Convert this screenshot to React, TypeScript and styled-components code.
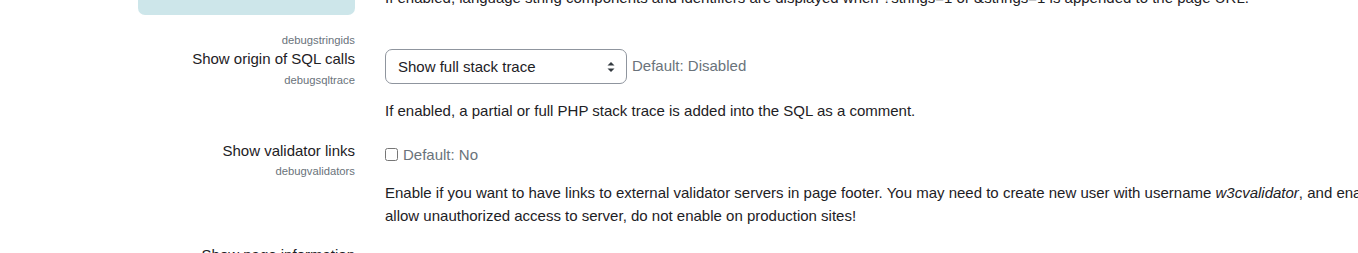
import styled, { createGlobalStyle } from "styled-components";

const GlobalStyle = createGlobalStyle`
  html, body {
    margin: 0;
    padding: 0;
    background: #fff;
    overflow: hidden;
  }
  body {
    font-family: "Liberation Sans", Arial, sans-serif;
    font-size: 15px;
    line-height: 1.5;
    color: #1d2125;
  }
`;

const Page = styled.div`
  margin-top: -13px;
  padding-left: 138px;
  height: 266px;
`;

const Item = styled.div`
  display: grid;
  grid-template-columns: 217px 1240px;
  column-gap: 30px;
`;

const LabelCol = styled.div`
  text-align: right;
  display: flex;
  flex-direction: column;
  align-items: flex-end;
`;

const Highlight = styled.div`
  align-self: stretch;
  height: 28px;
  margin-bottom: 17px;
  background: #cde6ea;
  border-radius: 0 0 7px 7px;
`;

const Title = styled.label`
  font-size: 15px;
  line-height: 22.5px;
  color: #1d2125;
`;

const ShortName = styled.div<{ $shift?: number }>`
  margin-top: ${(p) => p.$shift ?? 0}px;
  font-size: 11.25px;
  line-height: 16px;
  color: #6a737b;
`;

const SettingCol = styled.div`
  display: flex;
  flex-direction: column;
  align-items: flex-start;
`;

const Controls = styled.div<{ $offset: number }>`
  display: flex;
  align-items: center;
  margin-top: ${(p) => p.$offset}px;
`;

const SelectWrap = styled.div`
  position: relative;
  width: 242px;
  height: 35px;
`;

const Select = styled.select`
  appearance: none;
  -webkit-appearance: none;
  box-sizing: border-box;
  width: 100%;
  height: 100%;
  margin: 0;
  padding: 0 28px 0 12px;
  font-family: "Liberation Sans", Arial, sans-serif;
  font-size: 15px;
  color: #1d2125;
  background: #fff;
  border: 1px solid #8f959e;
  border-radius: 7px;
  outline: none;
`;

const Arrows = styled.svg`
  position: absolute;
  right: 12px;
  top: 13px;
  pointer-events: none;
`;

const DefaultInfo = styled.span<{ $gap: number }>`
  margin-left: ${(p) => p.$gap}px;
  color: #6a737b;
  font-size: 15px;
  line-height: 22.5px;
`;

const Checkbox = styled.input`
  width: 13px;
  height: 13px;
  margin: 0;
`;

const Description = styled.div`
  margin-top: 16px;
  margin-bottom: 17px;
  font-size: 15px;
  line-height: 22.5px;
  color: #1d2125;
`;

const TopDescription = styled(Description)`
  margin-top: 0;
`;

function SelectArrows() {
  return (
    <Arrows width="8" height="10" viewBox="0 0 8 10">
      <path d="M4 0 L7.5 3.6 L0.5 3.6 Z" fill="#343a40" />
      <path d="M4 10 L7.5 6.4 L0.5 6.4 Z" fill="#343a40" />
    </Arrows>
  );
}

export default function App() {
  return (
    <>
      <GlobalStyle />
      <Page>
        <Item>
          <LabelCol>
            <Highlight />
            <ShortName>debugstringids</ShortName>
          </LabelCol>
          <SettingCol>
            <TopDescription>
              If enabled, language string components and identifiers are
              displayed when ?strings=1 or &amp;strings=1 is appended to the
              page URL.
            </TopDescription>
          </SettingCol>
        </Item>

        <Item>
          <LabelCol>
            <Title htmlFor="debugsqltrace">Show origin of SQL calls</Title>
            <ShortName $shift={1}>debugsqltrace</ShortName>
          </LabelCol>
          <SettingCol>
            <Controls $offset={1}>
              <SelectWrap>
                <Select id="debugsqltrace" defaultValue="2">
                  <option value="0">Disabled</option>
                  <option value="1">Show only one line</option>
                  <option value="2">Show full stack trace</option>
                </Select>
                <SelectArrows />
              </SelectWrap>
              <DefaultInfo $gap={5}>Default: Disabled</DefaultInfo>
            </Controls>
            <Description>
              If enabled, a partial or full PHP stack trace is added into the
              SQL as a comment.
            </Description>
          </SettingCol>
        </Item>

        <Item>
          <LabelCol>
            <Title htmlFor="debugvalidators">Show validator links</Title>
            <ShortName $shift={1}>debugvalidators</ShortName>
          </LabelCol>
          <SettingCol>
            <Controls $offset={4}>
              <Checkbox type="checkbox" id="debugvalidators" />
              <DefaultInfo $gap={5}>Default: No</DefaultInfo>
            </Controls>
            <Description>
              Enable if you want to have links to external validator servers in
              page footer. You may need to create new user with username{" "}
              <em>w3cvalidator</em>, and enable guest access. These changes may
              allow unauthorized access to server, do not enable on production
              sites!
            </Description>
          </SettingCol>
        </Item>

        <Item>
          <LabelCol>
            <Title htmlFor="perfdebug">Show page information</Title>
            <ShortName $shift={1}>perfdebug</ShortName>
          </LabelCol>
          <SettingCol>
            <Controls $offset={4}>
              <Checkbox type="checkbox" id="perfdebug" />
              <DefaultInfo $gap={5}>Default: No</DefaultInfo>
            </Controls>
          </SettingCol>
        </Item>
      </Page>
    </>
  );
}
